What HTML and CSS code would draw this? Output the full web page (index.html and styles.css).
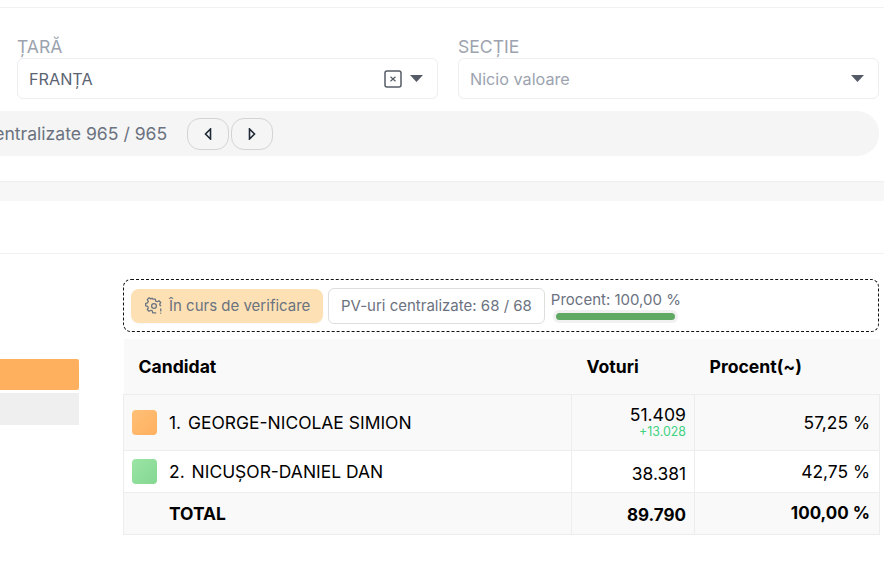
FILE: index.html
```html
<!DOCTYPE html>
<html lang="ro">
<head>
<meta charset="utf-8">
<title>Rezultate</title>
<link rel="stylesheet" href="styles.css">
</head>
<body>
<div class="page">
  <div class="topline"></div>
  <section class="filters">
    <div class="field">
      <label class="label">ȚARĂ</label>
      <div class="select">
        <span class="value">FRANȚA</span>
        <svg class="clear" width="18" height="18" viewBox="0 0 18 18"><rect x="1" y="1" width="16" height="16" rx="2" fill="none" stroke="#555b66" stroke-width="1.5"/><path d="M6.5 6.8 11.5 11.2M11.5 6.8 6.5 11.2" stroke="#555b66" stroke-width="1.2" fill="none"/></svg>
        <svg class="caret" width="13" height="7" viewBox="0 0 13 7"><path d="M0 0H13L6.5 7Z" fill="#555b66"/></svg>
      </div>
    </div>
    <div class="field">
      <label class="label">SECȚIE</label>
      <div class="select">
        <span class="value placeholder">Nicio valoare</span>
        <svg class="caret" width="13" height="7" viewBox="0 0 13 7"><path d="M0 0H13L6.5 7Z" fill="#555b66"/></svg>
      </div>
    </div>
  </section>
  <div class="pager">
    <span class="pager-text">PV-uri centralizate 965 / 965</span>
    <div class="pager-btns">
      <button class="nav"><svg width="8" height="12" viewBox="0 0 8 12"><path d="M6.5 1V11L1.5 6Z" fill="none" stroke="#1f2937" stroke-width="1.6"/></svg></button>
      <button class="nav"><svg width="8" height="12" viewBox="0 0 8 12"><path d="M1.5 1V11L6.5 6Z" fill="none" stroke="#1f2937" stroke-width="1.6"/></svg></button>
    </div>
  </div>
  <div class="band"></div>
  <div class="divider"></div>
  <section class="results">
    <aside class="bars">
      <div class="bar bar-orange"></div>
      <div class="bar bar-gray"></div>
    </aside>
    <div class="main">
      <div class="status">
        <div class="badge">
          <svg width="18" height="18" viewBox="0 0 24 24" fill="none" stroke="#6b7280" stroke-width="1.7" stroke-linecap="round" stroke-linejoin="round"><path d="M10.3 2.8h3.4l.6 2.6 2 .9 2.3-1.4 2.4 2.4-1.4 2.3.8 2h.6M14.3 21.2h-4l-.6-2.6-2-.9-2.3 1.4-2.4-2.4 1.4-2.3-.9-2-2.6-.6v-3.4l2.6-.6.9-2-1.4-2.3 2.4-2.4 2.3 1.4 2-.9"/><circle cx="12" cy="12" r="3.2"/><path d="M21 16v2.5M21 21.5v.1"/></svg>
          <span>În curs de verificare</span>
        </div>
        <div class="count">PV-uri centralizate: 68 / 68</div>
        <div class="progress">
          <span class="progress-text">Procent: 100,00 %</span>
          <div class="track"><div class="fill"></div></div>
        </div>
      </div>
      <table class="results-table">
        <colgroup><col class="c1"><col class="c2"><col class="c3"></colgroup>
        <thead>
          <tr class="head"><th class="th-name">Candidat</th><th class="th-votes">Voturi</th><th class="th-pct">Procent(~)</th></tr>
        </thead>
        <tbody>
          <tr class="row row-1 shaded">
            <td><div class="cand"><span class="swatch sw-orange"></span><span><span class="idx">1.</span> GEORGE-NICOLAE SIMION</span></div></td>
            <td class="num votes-cell"><div class="votes">51.409</div><div class="delta">+13.028</div></td>
            <td class="num">57,25 %</td>
          </tr>
          <tr class="row row-2">
            <td><div class="cand"><span class="swatch sw-green"></span><span><span class="idx">2.</span> NICUȘOR-DANIEL DAN</span></div></td>
            <td class="num votes-cell"><span class="low">38.381</span></td>
            <td class="num">42,75 %</td>
          </tr>
          <tr class="row row-3 shaded total">
            <td><div class="cand"><span class="swatch sw-none"></span><span>TOTAL</span></div></td>
            <td class="num votes-cell"><span class="low">89.790</span></td>
            <td class="num">100,00 %</td>
          </tr>
        </tbody>
      </table>
    </div>
  </section>
</div>
</body>
</html>
```
FILE: styles.css
```css
* { box-sizing: border-box; }
html, body { margin: 0; padding: 0; background: #fff; }
body { font-family: Inter, "Liberation Sans", sans-serif; font-size: 17.6px; color: #000; }
.page { width: 884px; height: 568px; overflow: hidden; padding-top: 7px; }
.topline { height: 1px; background: #f1f1f2; }

.filters { display: flex; gap: 20px; padding: 28px 5px 0 17px; }
.field { flex: 1; min-width: 0; }
.label { display: block; height: 22px; line-height: 21px; color: #9ca3af; }
.select { display: flex; align-items: center; height: 41px; padding: 0 14px 0 11px; border: 1px solid #eceef1; border-radius: 6px; background: #fff; font-size: 16.2px; }
.value { flex: 1; color: #5b6472; }
.placeholder { color: #9ca3af; }
.clear { margin-right: 8px; }

.pager { display: flex; align-items: center; height: 45px; margin: 12px 5px 0 -100px; padding-left: 27px; gap: 20px; border-radius: 0 22px 22px 0; background: #f5f5f5; }
.pager-text { color: #6b7280; white-space: nowrap; }
.pager-btns { display: flex; gap: 2px; }
.nav { display: flex; align-items: center; justify-content: center; width: 42px; height: 32px; padding: 0; border: 1px solid #d4d4d4; border-radius: 13px; background: #f5f5f5; }

.band { height: 20px; margin-top: 25px; background: #f7f7f7; box-shadow: inset 0 2px 2px -1px #eeeeee; }
.divider { height: 1px; margin-top: 52px; background: #f1f1f2; }

.results { display: flex; padding-top: 25px; }
.bars { flex: none; width: 123px; padding-top: 80px; }
.bar { width: 79px; height: 32px; }
.bar-orange { height: 31px; margin-bottom: 3px; background: #ffb05f; border-radius: 0 2px 2px 0; }
.bar-gray { background: #efefef; }
.main { width: 756px; }

.status { display: flex; align-items: center; height: 53px; padding: 0 7px; border: 1px dashed #111; border-radius: 8px; font-size: 15px; color: #6b7280; }
.badge { display: flex; align-items: center; gap: 6px; width: 192px; height: 34px; padding-left: 14px; border-radius: 8px; background: #fde1b4; box-shadow: 0 1px 2px rgba(0,0,0,.04); }
.count { display: flex; align-items: center; height: 36px; margin-left: 5px; padding: 0 12px; border: 1px solid #dedede; border-radius: 6px; background: #fff; }
.progress { margin-left: 6px; margin-top: 2px; }
.progress-text { display: block; padding-top: 1px; line-height: 18px; }
.track { width: 125px; height: 13px; margin: 1px 0 0 2px; padding: 3px 3px; border-radius: 6px; background: #f1f1f1; }
.fill { height: 7px; border-radius: 4px; background: #5fa962; }

.results-table { width: 756px; margin-top: 7px; border-collapse: collapse; table-layout: fixed; }
.c1 { width: 448px; }
.c2 { width: 123px; }
.c3 { width: 185px; }
.results-table th { text-align: left; font-weight: 700; }
.head { height: 55px; background: #f9f9f9; border-bottom: 1px solid #ededed; }
.th-name, .th-votes, .th-pct { padding-left: 15px; }
.row td { padding: 0; border: 1px solid #ededed; border-top: 0; }
.shaded { background: #f9f9f9; }
.row-1 { height: 56px; }
.row-2 { height: 42px; }
.row-3 { height: 42px; }
.cand { display: flex; align-items: center; gap: 12px; padding-left: 8px; font-size: 17.45px; color: #000; }
.idx { margin-right: 2px; }
.swatch { flex: none; width: 25px; height: 25px; border-radius: 4px; }
.sw-orange { background: linear-gradient(135deg, #ffc078, #ffb05f); }
.sw-green { background: linear-gradient(135deg, #9be5a5, #84d792); }
.sw-none { visibility: hidden; }
.results-table .num { text-align: right; padding-right: 9px; font-size: 17.4px; }
.results-table .votes-cell { padding-right: 8px; }
.votes { font-size: 17.6px; line-height: 18px; }
.delta { font-size: 12.4px; line-height: 12px; margin-top: 2px; color: #3fd27f; }
.low { position: relative; top: 2px; }
.total td { font-weight: 700; }
.results-table .total .num { font-size: 17px; }
```
